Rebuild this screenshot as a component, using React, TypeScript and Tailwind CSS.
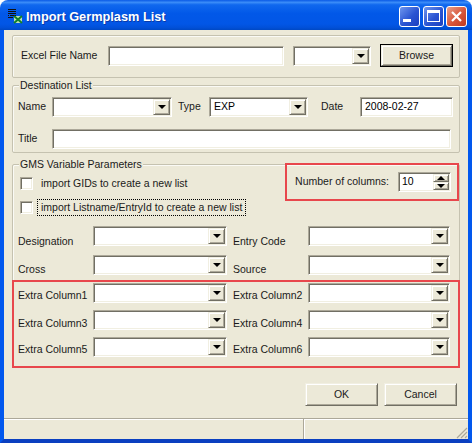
import type { ReactNode } from 'react';

const sunken =
  'border border-t-[#aca899] border-l-[#aca899] border-r-white border-b-white bg-white shadow-[inset_1px_1px_0_#716f64,inset_-1px_-1px_0_#f1efe2]';
const raised =
  'border border-t-[#f1efe2] border-l-[#f1efe2] border-r-[#716f64] border-b-[#716f64] bg-[#ece9d8] shadow-[inset_1px_1px_0_#ffffff,inset_-1px_-1px_0_#aca899]';

function Arrow() {
  return (
    <svg width="8" height="4" viewBox="0 0 8 4">
      <path d="M0 0h8L4 4z" fill="#000" />
    </svg>
  );
}

function TextBox({ value, className }: { value?: string; className: string }) {
  return (
    <div className={`${sunken} flex h-[20px] items-center pb-[1px] pl-[4px] text-black ${className}`}>
      {value}
    </div>
  );
}

function Combo({ value, className }: { value?: string; className: string }) {
  return (
    <div className={`${sunken} flex h-[20px] items-stretch p-[1px] ${className}`}>
      <div className="flex-1 pt-[1px] pl-[3px] leading-[13px] text-black">{value}</div>
      <div className={`${raised} flex w-[17px] items-center justify-center`}>
        <Arrow />
      </div>
    </div>
  );
}

function Group({ legend, className, children }: { legend?: string; className: string; children: ReactNode }) {
  return (
    <div className={`relative rounded-[2px] border border-[#c5c2b0] shadow-[inset_1px_1px_0_#fafaf5] ${className}`}>
      {legend && (
        <span className="absolute -top-[8px] left-[6px] bg-[#ece9d8] px-[1px] leading-[14px]">{legend}</span>
      )}
      {children}
    </div>
  );
}

function FieldRow({
  left,
  right,
  className,
  labelPad,
}: {
  left: string;
  right: string;
  className: string;
  labelPad: string;
}) {
  return (
    <div className={`flex h-[20px] items-center ${className}`}>
      <span className={`w-[76px] shrink-0 pl-[5px] ${labelPad}`}>{left}</span>
      <Combo className="ml-[4px] w-[134px]" />
      <span className={`ml-[6px] w-[75px] shrink-0 ${labelPad}`}>{right}</span>
      <Combo className="w-[142px]" />
    </div>
  );
}

function Check({ label, focused }: { label: string; focused?: boolean }) {
  return (
    <div className="flex h-[13px] items-center">
      <div className={`${sunken} h-[13px] w-[13px] shrink-0`} />
      {focused ? (
        <span className="ml-[4px] border border-dotted border-black px-[3px] leading-[15px]">{label}</span>
      ) : (
        <span className="ml-[8px]">{label}</span>
      )}
    </div>
  );
}

function PushButton({ label, primary }: { label: string; primary?: boolean }) {
  if (primary) {
    return (
      <div className="h-[23px] w-[73px] border border-black">
        <div className={`${raised} flex h-full items-center justify-center`}>{label}</div>
      </div>
    );
  }
  return <div className={`${raised} flex h-[23px] w-[73px] items-center justify-center`}>{label}</div>;
}

function CaptionButton({ className, children }: { className: string; children: ReactNode }) {
  return (
    <div className={`flex h-[21px] w-[21px] items-center justify-center rounded-[3px] border border-white ${className}`}>
      {children}
    </div>
  );
}

function TitleBar() {
  return (
    <div className="flex h-[30px] shrink-0 items-center rounded-t-[8px] bg-[linear-gradient(to_bottom,#0a5ae6_0%,#3a8cf8_8%,#1068ee_16%,#0258e8_45%,#0256e6_80%,#0150d8_92%,#0048c4_100%)] pt-[2px] pr-[5px] pl-[7px]">
      <svg width="16" height="16" viewBox="0 0 16 16" className="shrink-0">
        <path d="M1 1h8v1H1zM1 3h8v1H1zM1 5h8v1H1zM3 7h6v1H3zM1 7h1v1H1zM1 9h5v1H1z" fill="#111" />
        <path d="M7 8h8v7H7z" fill="#bfe0b8" />
        <path d="M7 8l8 7M15 8l-8 7" stroke="#11802a" strokeWidth="2" />
      </svg>
      <span className="ml-[3px] flex-1 pt-[2px] text-[12.75px] font-bold text-white [text-shadow:1px_1px_0_#0a3aa8]">
        Import Germplasm List
      </span>
      <div className="flex gap-[3px]">
        <CaptionButton className="bg-[linear-gradient(135deg,#6f96ee,#2a54d2_55%,#1c3fc0)]">
          <div className="mt-[9px] mr-[6px] h-[3px] w-[8px] bg-white" />
        </CaptionButton>
        <CaptionButton className="bg-[linear-gradient(135deg,#6f96ee,#2a54d2_55%,#1c3fc0)]">
          <div className="h-[12px] w-[13px] border border-t-[3px] border-white" />
        </CaptionButton>
        <CaptionButton className="-ml-[1px] bg-[linear-gradient(135deg,#e8a08a,#d8553a_55%,#c03a20)]">
          <svg width="13" height="13" viewBox="0 0 13 13">
            <path d="M2 2l9 9M11 2l-9 9" stroke="#fff" strokeWidth="2.2" />
          </svg>
        </CaptionButton>
      </div>
    </div>
  );
}

function StatusBar() {
  return (
    <div className="mt-auto flex h-[21px] border-t border-[#aca899] shadow-[inset_0_1px_0_#ffffff]">
      <div className="w-[300px] border-r border-[#aca899]" />
      <div className="relative flex-1 border-l border-white">
        <svg width="13" height="13" viewBox="0 0 13 13" className="absolute right-0 bottom-0">
          <path d="M12 2L2 12M12 6L6 12M12 10l-2 2" stroke="#aca899" strokeWidth="1.2" />
        </svg>
      </div>
    </div>
  );
}

export default function App() {
  return (
    <div className="relative flex h-[443px] w-[472px] flex-col overflow-hidden bg-white font-['Liberation_Sans',Arial,sans-serif] text-[10.5px] text-[#1a1a1a]">
      <TitleBar />
      <div className="flex flex-1 flex-col border-x-4 border-b-4 border-x-[#0258ee] border-b-[#0a3fc0] bg-[#ece9d8]">
        <div className="px-[8px]">
          <Group className="mt-[5px] h-[43px]">
            <div className="flex items-center pt-[8px]">
              <span className="w-[95px] pl-[8px]">Excel File Name</span>
              <TextBox className="w-[176px]" />
              <Combo className="ml-[9px] w-[78px]" />
              <div className="ml-[9px]">
                <PushButton label="Browse" primary />
              </div>
            </div>
          </Group>

          <Group legend="Destination List" className="mt-[7px] h-[68px]">
            <div className="mt-[11px] flex h-[20px] items-center">
              <span className="w-[39px] pl-[5px]">Name</span>
              <Combo className="w-[120px]" />
              <span className="ml-[6px] w-[31px]">Type</span>
              <Combo value="EXP" className="w-[99px]" />
              <span className="ml-[13px] w-[39px]">Date</span>
              <TextBox value="2008-02-27" className="w-[93px]" />
            </div>
            <div className="mt-[12px] flex h-[20px] items-center">
              <span className="w-[39px] pl-[5px]">Title</span>
              <TextBox className="w-[399px]" />
            </div>
          </Group>

          <Group legend="GMS Variable Parameters" className="mt-[11px] h-[204px]">
            <div className="flex">
              <div className="flex flex-col gap-[11px] pt-[12px] pl-[7px]">
                <Check label="import GIDs to create a new list" />
                <Check label="import Listname/EntryId to create a new list" focused />
              </div>
              <div className="mt-[7px] ml-auto flex h-[20px] items-center pr-[8px]">
                <span className="mr-[9px]">Number of columns:</span>
                <div className={`${sunken} flex h-[20px] w-[53px] p-[1px]`}>
                  <div className="flex-1 pt-[1px] pl-[2px] leading-[13px] text-black">10</div>
                  <div className="flex w-[16px] flex-col">
                    <div className={`${raised} flex h-[9px] items-center justify-center`}>
                      <svg width="8" height="4" viewBox="0 0 8 4">
                        <path d="M0 4h8L4 0z" fill="#000" />
                      </svg>
                    </div>
                    <div className={`${raised} flex h-[9px] items-center justify-center`}>
                      <Arrow />
                    </div>
                  </div>
                </div>
              </div>
            </div>
            <FieldRow left="Designation" right="Entry Code" className="mt-[12px]" labelPad="pt-[12px]" />
            <FieldRow left="Cross" right="Source" className="mt-[9px]" labelPad="pt-[10px]" />
            <FieldRow left="Extra Column1" right="Extra Column2" className="mt-[8px]" labelPad="pt-[6px]" />
            <FieldRow left="Extra Column3" right="Extra Column4" className="mt-[7px]" labelPad="pt-[7px]" />
            <FieldRow left="Extra Column5" right="Extra Column6" className="mt-[7px]" labelPad="pt-[6px]" />
          </Group>

          <div className="mt-[15px] flex justify-end gap-[6px] pr-[3px]">
            <PushButton label="OK" />
            <PushButton label="Cancel" />
          </div>
        </div>
        <StatusBar />
      </div>

      {/* red annotation boxes drawn over the dialog */}
      <div className="absolute top-[163px] left-[285px] h-[38px] w-[174px] border-2 border-[#e8474c]" />
      <div className="absolute top-[280px] left-[12px] h-[88px] w-[448px] border-2 border-[#e8474c]" />
    </div>
  );
}
